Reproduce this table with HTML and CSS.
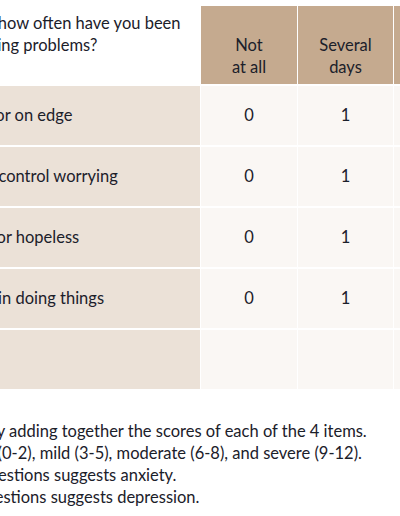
FILE: index.html
```html
<!DOCTYPE html>
<html lang="en">
<head>
<meta charset="utf-8">
<title>PHQ-4</title>
<link rel="stylesheet" href="styles.css">
</head>
<body>
<main class="page">
  <table class="phq">
    <colgroup>
      <col class="c-q">
      <col class="c-a">
      <col class="c-b">
      <col class="c-a">
      <col class="c-a">
    </colgroup>
    <thead>
      <tr>
        <th class="q-head">Over the last 2 weeks, how often have you been bothered by the following problems?</th>
        <th class="opt">Not<br>at all</th>
        <th class="opt">Several<br>days</th>
        <th class="opt">More than<br>half the<br>days</th>
        <th class="opt">Nearly<br>every day</th>
      </tr>
    </thead>
    <tbody>
      <tr><td class="item">Feeling nervous, anxious or on edge</td><td class="val">0</td><td class="val">1</td><td class="val">2</td><td class="val">3</td></tr>
      <tr><td class="item">Not being able to stop or control worrying</td><td class="val">0</td><td class="val">1</td><td class="val">2</td><td class="val">3</td></tr>
      <tr><td class="item">Feeling down, depressed or hopeless</td><td class="val">0</td><td class="val">1</td><td class="val">2</td><td class="val">3</td></tr>
      <tr><td class="item">Little interest or pleasure in doing things</td><td class="val">0</td><td class="val">1</td><td class="val">2</td><td class="val">3</td></tr>
      <tr><td class="item">Column totals</td><td class="val"></td><td class="val"></td><td class="val"></td><td class="val"></td></tr>
    </tbody>
  </table>
  <div class="notes">
    <p>Total score is determined by adding together the scores of each of the 4 items.</p>
    <p>Scores are rated as normal (0-2), mild (3-5), moderate (6-8), and severe (9-12).</p>
    <p>Total score ≥3 for first 2 questions suggests anxiety.</p>
    <p>Total score ≥3 for last 2 questions suggests depression.</p>
  </div>
</main>
</body>
</html>
```
FILE: styles.css
```css
* { box-sizing: border-box; }
html, body { margin: 0; background: #ffffff; }
body {
  font-family: Lato, "Noto Sans", sans-serif;
  font-size: 16.5px;
  color: #1b202a;
  overflow: hidden;
}
.page {
  margin-left: -200px;
  padding-top: 4px;
  width: 820px;
}
.phq {
  table-layout: fixed;
  width: 788px;
  border-collapse: separate;
  border-spacing: 1px 2px;
}
.c-q { width: 399px; }
.c-a { width: 96px; }
.c-b { width: 95px; }
.phq th, .phq td {
  font-weight: 400;
  line-height: 22px;
}
.q-head {
  background: #ffffff;
  text-align: left;
  vertical-align: top;
  padding: 6px 12px 0 32px;
}
.opt {
  background: #c5aa8f;
  text-align: center;
  vertical-align: bottom;
  padding: 5px 4px 6px;
  height: 78px;
}
.item {
  background: #ebe1d7;
  padding: 18px 16px 19px 13px;
  height: 59px;
}
.val {
  background: #faf7f4;
  text-align: center;
  padding: 18px 4px 19px;
  height: 59px;
}
.notes {
  padding: 29px 0 0 3px;
}
.notes p {
  margin: 0;
  line-height: 22px;
  white-space: nowrap;
}
```
